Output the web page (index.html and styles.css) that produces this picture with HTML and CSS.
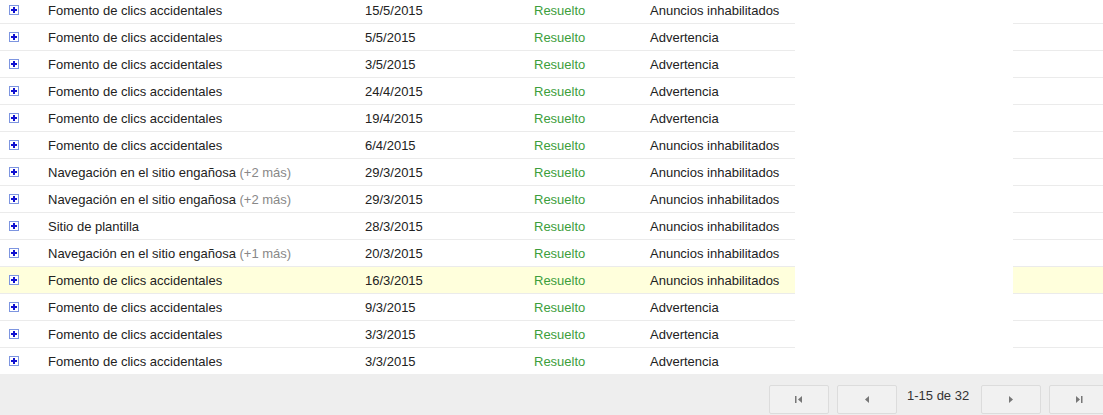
FILE: index.html
```html
<!DOCTYPE html>
<html>
	<head>
		<meta charset="UTF-8" />
		<title>Historial de infracciones</title>
		<link rel="stylesheet" href="styles.css">
	</head>
	<body>
		<svg width="0" height="0" class="defs">
			<symbol id="plus" viewBox="0 0 10 10">
				<rect x="0.5" y="0.5" width="9" height="9" fill="#fff" stroke="#7d95e0"/>
				<rect x="2" y="4" width="6" height="2" fill="#1010d0"/>
				<rect x="4" y="2" width="2" height="6" fill="#1010d0"/>
			</symbol>
		</svg>

		<table class="issues">
			<colgroup>
				<col class="c-exp"><col class="c-name"><col class="c-date"><col class="c-state"><col class="c-type"><col class="c-gap"><col class="c-end">
			</colgroup>
			<tr><td class="exp"><svg class="ico"><use href="#plus"/></svg></td><td>Fomento de clics accidentales</td><td>15/5/2015</td><td class="ok">Resuelto</td><td>Anuncios inhabilitados</td><td class="gap"></td><td></td></tr>
			<tr><td class="exp"><svg class="ico"><use href="#plus"/></svg></td><td>Fomento de clics accidentales</td><td>5/5/2015</td><td class="ok">Resuelto</td><td>Advertencia</td><td class="gap"></td><td></td></tr>
			<tr><td class="exp"><svg class="ico"><use href="#plus"/></svg></td><td>Fomento de clics accidentales</td><td>3/5/2015</td><td class="ok">Resuelto</td><td>Advertencia</td><td class="gap"></td><td></td></tr>
			<tr><td class="exp"><svg class="ico"><use href="#plus"/></svg></td><td>Fomento de clics accidentales</td><td>24/4/2015</td><td class="ok">Resuelto</td><td>Advertencia</td><td class="gap"></td><td></td></tr>
			<tr><td class="exp"><svg class="ico"><use href="#plus"/></svg></td><td>Fomento de clics accidentales</td><td>19/4/2015</td><td class="ok">Resuelto</td><td>Advertencia</td><td class="gap"></td><td></td></tr>
			<tr><td class="exp"><svg class="ico"><use href="#plus"/></svg></td><td>Fomento de clics accidentales</td><td>6/4/2015</td><td class="ok">Resuelto</td><td>Anuncios inhabilitados</td><td class="gap"></td><td></td></tr>
			<tr><td class="exp"><svg class="ico"><use href="#plus"/></svg></td><td>Navegación en el sitio engañosa <span class="more">(+2 más)</span></td><td>29/3/2015</td><td class="ok">Resuelto</td><td>Anuncios inhabilitados</td><td class="gap"></td><td></td></tr>
			<tr><td class="exp"><svg class="ico"><use href="#plus"/></svg></td><td>Navegación en el sitio engañosa <span class="more">(+2 más)</span></td><td>29/3/2015</td><td class="ok">Resuelto</td><td>Anuncios inhabilitados</td><td class="gap"></td><td></td></tr>
			<tr><td class="exp"><svg class="ico"><use href="#plus"/></svg></td><td>Sitio de plantilla</td><td>28/3/2015</td><td class="ok">Resuelto</td><td>Anuncios inhabilitados</td><td class="gap"></td><td></td></tr>
			<tr><td class="exp"><svg class="ico"><use href="#plus"/></svg></td><td>Navegación en el sitio engañosa <span class="more">(+1 más)</span></td><td>20/3/2015</td><td class="ok">Resuelto</td><td>Anuncios inhabilitados</td><td class="gap"></td><td></td></tr>
			<tr class="hover"><td class="exp"><svg class="ico"><use href="#plus"/></svg></td><td>Fomento de clics accidentales</td><td>16/3/2015</td><td class="ok">Resuelto</td><td>Anuncios inhabilitados</td><td class="gap"></td><td></td></tr>
			<tr><td class="exp"><svg class="ico"><use href="#plus"/></svg></td><td>Fomento de clics accidentales</td><td>9/3/2015</td><td class="ok">Resuelto</td><td>Advertencia</td><td class="gap"></td><td></td></tr>
			<tr><td class="exp"><svg class="ico"><use href="#plus"/></svg></td><td>Fomento de clics accidentales</td><td>3/3/2015</td><td class="ok">Resuelto</td><td>Advertencia</td><td class="gap"></td><td></td></tr>
			<tr class="last"><td class="exp"><svg class="ico"><use href="#plus"/></svg></td><td>Fomento de clics accidentales</td><td>3/3/2015</td><td class="ok">Resuelto</td><td>Advertencia</td><td class="gap"></td><td></td></tr>
		</table>

		<div class="pager">
			<button class="pg"><svg width="8" height="7"><rect x="0" y="0" width="1.5" height="7" fill="#777"/><path d="M7 0 L3 3.5 L7 7 Z" fill="#777"/></svg></button>
			<button class="pg"><svg width="8" height="7"><path d="M6 0 L2 3.5 L6 7 Z" fill="#777"/></svg></button>
			<span class="count">1-15 de 32</span>
			<button class="pg"><svg width="8" height="7"><path d="M2 0 L6 3.5 L2 7 Z" fill="#777"/></svg></button>
			<button class="pg"><svg width="8" height="7"><path d="M1 0 L5 3.5 L1 7 Z" fill="#777"/><rect x="6" y="0" width="1.5" height="7" fill="#777"/></svg></button>
		</div>
	</body>
</html>
```

FILE: styles.css
```css
body {
    margin: 0;
    width: 1103px;
    height: 415px;
    overflow: hidden;
    background-color: #fff;
    font-family: "Liberation Sans", Arial, sans-serif;
    font-size: 13px;
    color: #222;
}

.defs {
    position: absolute;
}

.issues {
    width: 1103px;
    table-layout: fixed;
    border-collapse: collapse;
    margin-top: -3px;
}

.c-exp { width: 40px; }
.c-name { width: 317px; }
.c-date { width: 169px; }
.c-state { width: 116px; }
.c-type { width: 153px; }
.c-gap { width: 218px; }
.c-end { width: 90px; }

.issues td {
    height: 26px;
    padding: 0 0 0 8px;
    border-bottom: 1px solid #ebebeb;
    white-space: nowrap;
    overflow: hidden;
    vertical-align: middle;
}

.issues td.exp {
    padding-left: 9px;
    line-height: 0;
}

.issues td.gap {
    border-bottom: none;
    background-color: #fff;
}

.issues tr.last td {
    border-bottom: none;
}

.issues tr.hover td {
    background-color: #ffffdc;
}
.issues tr.hover td.gap {
    background-color: #fff;
}

.ico {
    width: 10px;
    height: 10px;
    margin-top: -1px;
}

.ok {
    color: #3c9e3c;
}

.more {
    color: #888;
}

.pager {
    height: 41px;
    background-color: #eee;
    display: flex;
    align-items: center;
    padding-left: 769px;
    gap: 8px;
    white-space: nowrap;
}

.pg {
    flex: none;
    width: 60px;
    height: 29px;
    margin-top: 10px;
    background-color: #f1f1f1;
    border: 1px solid #dcdcdc;
    border-radius: 2px;
    padding: 0;
    display: flex;
    align-items: center;
    justify-content: center;
}

.count {
    flex: none;
    margin: 0 4px 0 2px;
    color: #333;
    font-size: 13px;
    padding-top: 1px;
}
```
